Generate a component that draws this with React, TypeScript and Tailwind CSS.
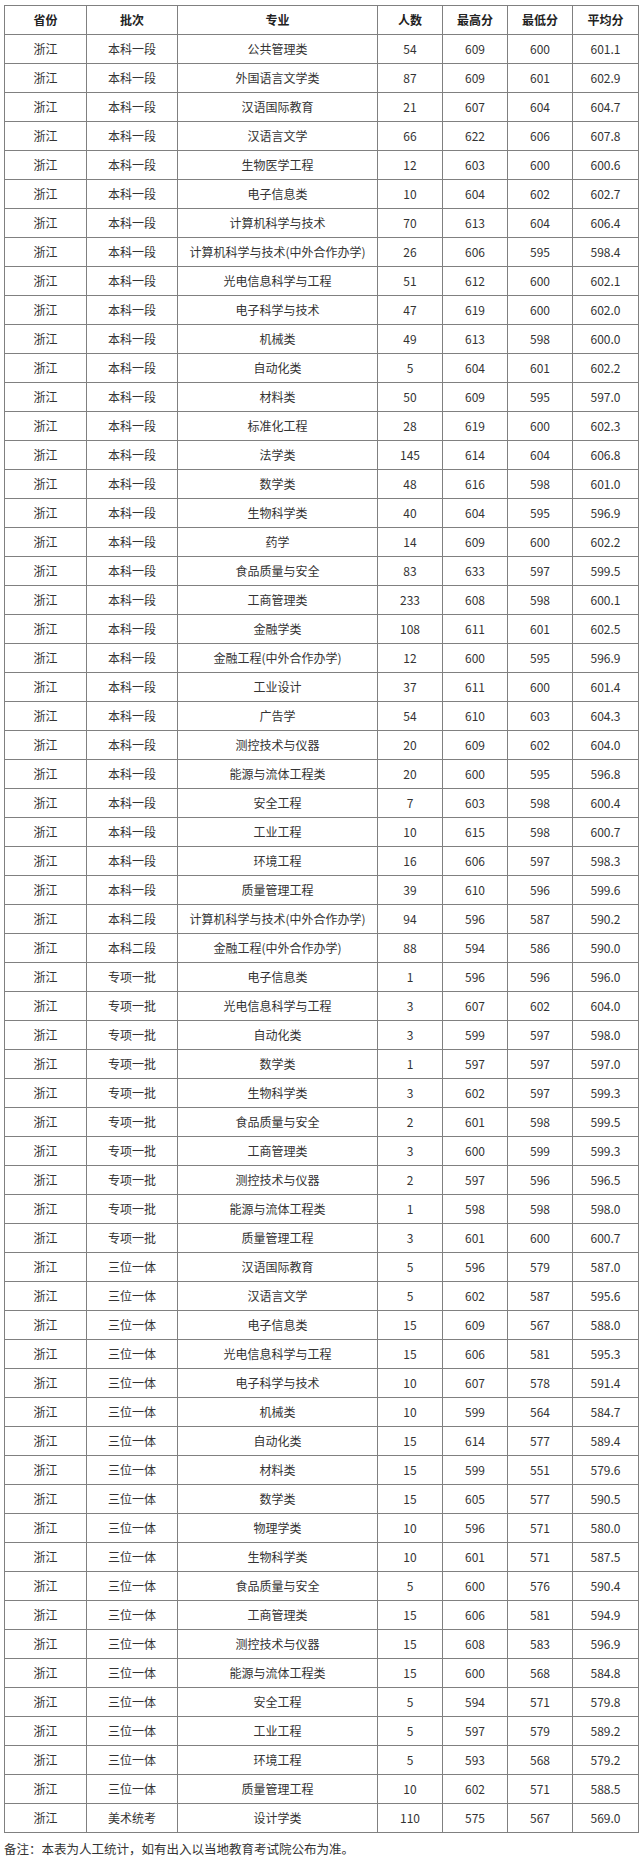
import React from "react";

type Row = [string, string, string, string, string, string];

const rows: Row[] = [
  ["本科一段", "公共管理类", "54", "609", "600", "601.1"],
  ["本科一段", "外国语言文学类", "87", "609", "601", "602.9"],
  ["本科一段", "汉语国际教育", "21", "607", "604", "604.7"],
  ["本科一段", "汉语言文学", "66", "622", "606", "607.8"],
  ["本科一段", "生物医学工程", "12", "603", "600", "600.6"],
  ["本科一段", "电子信息类", "10", "604", "602", "602.7"],
  ["本科一段", "计算机科学与技术", "70", "613", "604", "606.4"],
  ["本科一段", "计算机科学与技术(中外合作办学)", "26", "606", "595", "598.4"],
  ["本科一段", "光电信息科学与工程", "51", "612", "600", "602.1"],
  ["本科一段", "电子科学与技术", "47", "619", "600", "602.0"],
  ["本科一段", "机械类", "49", "613", "598", "600.0"],
  ["本科一段", "自动化类", "5", "604", "601", "602.2"],
  ["本科一段", "材料类", "50", "609", "595", "597.0"],
  ["本科一段", "标准化工程", "28", "619", "600", "602.3"],
  ["本科一段", "法学类", "145", "614", "604", "606.8"],
  ["本科一段", "数学类", "48", "616", "598", "601.0"],
  ["本科一段", "生物科学类", "40", "604", "595", "596.9"],
  ["本科一段", "药学", "14", "609", "600", "602.2"],
  ["本科一段", "食品质量与安全", "83", "633", "597", "599.5"],
  ["本科一段", "工商管理类", "233", "608", "598", "600.1"],
  ["本科一段", "金融学类", "108", "611", "601", "602.5"],
  ["本科一段", "金融工程(中外合作办学)", "12", "600", "595", "596.9"],
  ["本科一段", "工业设计", "37", "611", "600", "601.4"],
  ["本科一段", "广告学", "54", "610", "603", "604.3"],
  ["本科一段", "测控技术与仪器", "20", "609", "602", "604.0"],
  ["本科一段", "能源与流体工程类", "20", "600", "595", "596.8"],
  ["本科一段", "安全工程", "7", "603", "598", "600.4"],
  ["本科一段", "工业工程", "10", "615", "598", "600.7"],
  ["本科一段", "环境工程", "16", "606", "597", "598.3"],
  ["本科一段", "质量管理工程", "39", "610", "596", "599.6"],
  ["本科二段", "计算机科学与技术(中外合作办学)", "94", "596", "587", "590.2"],
  ["本科二段", "金融工程(中外合作办学)", "88", "594", "586", "590.0"],
  ["专项一批", "电子信息类", "1", "596", "596", "596.0"],
  ["专项一批", "光电信息科学与工程", "3", "607", "602", "604.0"],
  ["专项一批", "自动化类", "3", "599", "597", "598.0"],
  ["专项一批", "数学类", "1", "597", "597", "597.0"],
  ["专项一批", "生物科学类", "3", "602", "597", "599.3"],
  ["专项一批", "食品质量与安全", "2", "601", "598", "599.5"],
  ["专项一批", "工商管理类", "3", "600", "599", "599.3"],
  ["专项一批", "测控技术与仪器", "2", "597", "596", "596.5"],
  ["专项一批", "能源与流体工程类", "1", "598", "598", "598.0"],
  ["专项一批", "质量管理工程", "3", "601", "600", "600.7"],
  ["三位一体", "汉语国际教育", "5", "596", "579", "587.0"],
  ["三位一体", "汉语言文学", "5", "602", "587", "595.6"],
  ["三位一体", "电子信息类", "15", "609", "567", "588.0"],
  ["三位一体", "光电信息科学与工程", "15", "606", "581", "595.3"],
  ["三位一体", "电子科学与技术", "10", "607", "578", "591.4"],
  ["三位一体", "机械类", "10", "599", "564", "584.7"],
  ["三位一体", "自动化类", "15", "614", "577", "589.4"],
  ["三位一体", "材料类", "15", "599", "551", "579.6"],
  ["三位一体", "数学类", "15", "605", "577", "590.5"],
  ["三位一体", "物理学类", "10", "596", "571", "580.0"],
  ["三位一体", "生物科学类", "10", "601", "571", "587.5"],
  ["三位一体", "食品质量与安全", "5", "600", "576", "590.4"],
  ["三位一体", "工商管理类", "15", "606", "581", "594.9"],
  ["三位一体", "测控技术与仪器", "15", "608", "583", "596.9"],
  ["三位一体", "能源与流体工程类", "15", "600", "568", "584.8"],
  ["三位一体", "安全工程", "5", "594", "571", "579.8"],
  ["三位一体", "工业工程", "5", "597", "579", "589.2"],
  ["三位一体", "环境工程", "5", "593", "568", "579.2"],
  ["三位一体", "质量管理工程", "10", "602", "571", "588.5"],
  ["美术统考", "设计学类", "110", "575", "567", "569.0"],
];

const headers = ["省份", "批次", "专业", "人数", "最高分", "最低分", "平均分"];

export default function App() {
  return (
    <div
      className="bg-white text-[#333333] pt-[5px] pl-[4px]"
      style={{ fontFamily: '"Noto Sans CJK SC", "Noto Sans", sans-serif' }}
    >
      <table className="table-fixed border-collapse w-[634px] border border-[#404040] text-[12px] leading-none">
        <colgroup>
          <col className="w-[82px]" />
          <col className="w-[91px]" />
          <col className="w-[200px]" />
          <col className="w-[65px]" />
          <col className="w-[65px]" />
          <col className="w-[65px]" />
          <col className="w-[66px]" />
        </colgroup>
        <thead>
          <tr>
            {headers.map((h) => (
              <th
                key={h}
                className="h-[29px] p-0 border border-[#808080] text-center font-bold text-[#222222]"
              >
                {h}
              </th>
            ))}
          </tr>
        </thead>
        <tbody>
          {rows.map((r, i) => (
            <tr key={i}>
              <td className="h-[29px] p-0 border border-[#808080] text-center">浙江</td>
              {r.map((c, j) => (
                <td key={j} className="h-[29px] p-0 border border-[#808080] text-center whitespace-nowrap">
                  {c}
                </td>
              ))}
            </tr>
          ))}
        </tbody>
      </table>
      <div className="mt-[8px] text-[12.5px] leading-[16px] text-[#333333]">
        备注：本表为人工统计，如有出入以当地教育考试院公布为准。
      </div>
    </div>
  );
}
